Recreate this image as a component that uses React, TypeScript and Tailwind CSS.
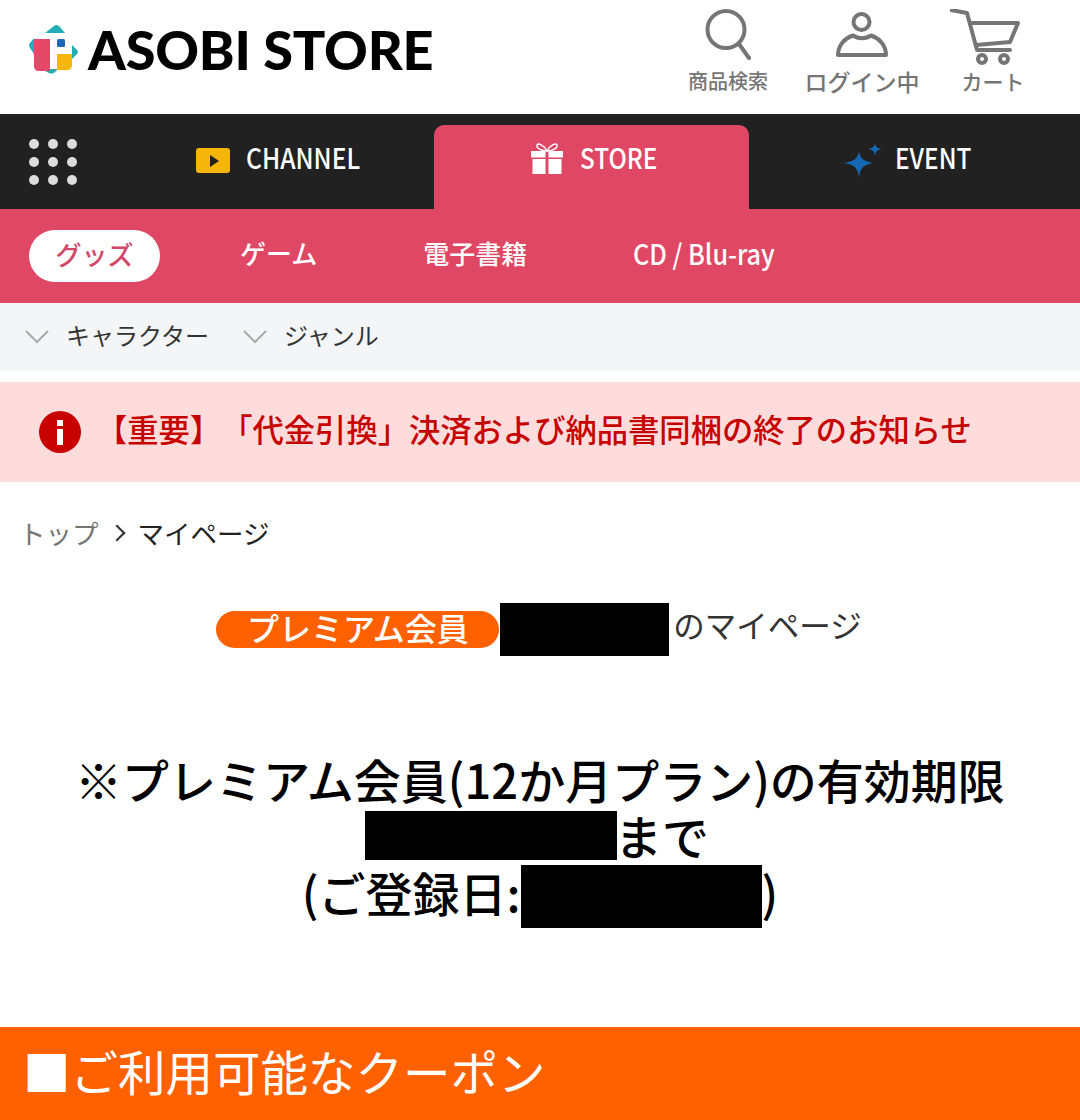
import React from "react"

const jp = "font-['Noto_Sans_CJK_JP','Noto_Sans',sans-serif]"

const LogoMark = () => (
  <svg width="50" height="50" viewBox="0 0 50 50" className="shrink-0">
    <path d="M16 8 L25 1 Q27 -1 30 1 L36 8 Z" fill="#22aeb4" />
    <path d="M5 13 L1 18 Q-1 20 1 23 L5 29 Z" fill="#22aeb4" />
    <path d="M43 34 L48 29 Q50 27 48 25 L43 20 Z" fill="#22aeb4" />
    <path d="M12 44 L20 48 Q23 49 25 48 L29 44 Z" fill="#22aeb4" />
    <path d="M5 14 H21 V46 H10 Q5 46 5 41 Z" fill="#e44a68" />
    <rect x="28" y="14" width="8" height="8" rx="1.500" fill="#1b69b8" />
    <path d="M28 29 H43 V40 Q43 45 38 45 H28 Z" fill="#f6b60b" />
  </svg>
)

const SearchIcon = () => (
  <svg width="46" height="54" viewBox="0 0 46 54" fill="none" stroke="#757575" strokeWidth="4" strokeLinecap="round" className="mt-[8px]">
    <circle cx="21" cy="21.500" r="18.500" />
    <path d="M34 36 L44 50" />
  </svg>
)

const UserIcon = () => (
  <svg width="52" height="46" viewBox="0 0 52 46" fill="none" stroke="#757575" strokeWidth="4" strokeLinejoin="round" className="mt-[12px]">
    <circle cx="25.500" cy="10" r="8" />
    <path d="M2 43 C2 33 9 26 17 23.500 C22 27 30 27 35 23.500 C43 26 50 33 50 43 Z" />
  </svg>
)

const CartIcon = () => (
  <svg width="70" height="56" viewBox="0 0 70 56" fill="none" stroke="#757575" strokeWidth="4" strokeLinecap="round" strokeLinejoin="round" className="mt-[9px] mr-[16px]">
    <path d="M1 1 L17 4 L27 41 H60" />
    <path d="M20 14 H68 L60 33 L26 36" />
    <circle cx="32" cy="50" r="4" />
    <circle cx="54" cy="50" r="4" />
  </svg>
)

const GiftIcon = () => (
  <svg width="32" height="32" viewBox="0 0 32 32" fill="#fff" className="shrink-0">
    <path d="M16 8 C12 1 7 0 6 2 C5 5 10 8 16 8 C22 8 27 5 26 2 C25 0 20 1 16 8 Z" fill="none" stroke="#fff" strokeWidth="1.400" />
    <rect x="0" y="8" width="14.500" height="6.500" />
    <rect x="17.500" y="8" width="14.500" height="6.500" />
    <rect x="1.500" y="16" width="13" height="15" />
    <rect x="17.500" y="16" width="13" height="15" />
  </svg>
)

const SparkleIcon = () => (
  <svg width="38" height="36" viewBox="0 0 38 36" fill="#1569b3" className="shrink-0">
    <path d="M15 8 C16 15 19 18 29 20 C19 22 16 25 15 35 C14 25 11 22 0 20 C11 18 14 15 15 8 Z" />
    <path d="M31 0 C31.500 3.500 33 5 37.500 6 C33 7 31.500 8.500 31 13 C30.500 8.500 29 7 24.500 6 C29 5 30.500 3.500 31 0 Z" />
  </svg>
)

const Chevron = () => (
  <svg width="24" height="14" viewBox="0 0 24 14" fill="none" stroke="#a9abab" strokeWidth="2" className="shrink-0">
    <path d="M1 1 L12 12 L23 1" />
  </svg>
)

const HeaderAction = ({ icon, label, className }: { icon: React.ReactNode; label: string; className: string }) => (
  <div className={`flex flex-col items-center ${className}`}>
    <div className="flex h-[66px] items-start justify-center">{icon}</div>
    <span className="leading-[30px] font-medium text-[#757575] whitespace-nowrap">{label}</span>
  </div>
)

const Blackout = ({ className }: { className: string }) => (
  <span className={`inline-block shrink-0 bg-black ${className}`} />
)

export default function App() {
  return (
    <div className={`${jp} w-[1080px] h-[1120px] overflow-hidden bg-white [text-spacing-trim:space-all]`}>
      {/* header */}
      <header className="flex h-[114px] items-start justify-between">
        <div className="flex items-center gap-[9px] pl-[29px] pt-[24px]">
          <LogoMark />
          <span className="font-['Lato',sans-serif] text-[54px] leading-[52px] font-black text-black tracking-[-0.2px] whitespace-nowrap">
            ASOBI STORE
          </span>
        </div>
        <div className="flex items-start pr-[51px]">
          <HeaderAction icon={<SearchIcon />} label="商品検索" className="w-[82px] text-[20px]" />
          <HeaderAction icon={<UserIcon />} label="ログイン中" className="ml-[35px] w-[116px] text-[23px]" />
          <HeaderAction icon={<CartIcon />} label="カート" className="ml-[37px] w-[72px] text-[21px]" />
        </div>
      </header>

      {/* main tabs */}
      <nav className="flex h-[95px] bg-[#212121] text-[28px] font-medium text-white">
        <div className="grid w-[119px] shrink-0 grid-cols-3 content-center justify-items-center gap-x-[8px] gap-y-[8px] pl-[29px] pr-[42px]">
          {Array.from({ length: 9 }).map((_, i) => (
            <span key={i} className="size-[10px] rounded-full bg-[#dcdcdc]" />
          ))}
        </div>
        <div className="flex h-full w-[315px] items-center justify-center gap-[16px] pb-[2px] pl-[3px]">
          <span className="flex h-[25px] w-[34px] items-center justify-center rounded-[3px] bg-[#f5b50a]">
            <span className="ml-[2px] border-y-[6px] border-l-[9px] border-y-transparent border-l-[#212121]" />
          </span>
          <span className="mb-[7px] inline-block w-[114px] origin-left scale-x-[.88] whitespace-nowrap">CHANNEL</span>
        </div>
        <div className="mt-[11px] flex h-[84px] w-[315px] items-center justify-center gap-[17px] rounded-t-[10px] bg-[#df4764] pb-[16px] pl-[4px]">
          <GiftIcon />
          <span className="mb-[4px] inline-block w-[76px] origin-left scale-x-[.87] whitespace-nowrap">STORE</span>
        </div>
        <div className="flex h-full w-[315px] items-center justify-center gap-[13px] pb-[2px]">
          <SparkleIcon />
          <span className="mb-[8px] inline-block w-[75px] origin-left scale-x-[.87] whitespace-nowrap">EVENT</span>
        </div>
      </nav>

      {/* sub nav */}
      <div className="flex h-[94px] items-center bg-[#df4764] pl-[29px] text-[26px] leading-[38px] font-medium text-white">
        <span className="flex h-[52px] w-[131px] items-center justify-center rounded-full bg-white pb-[5px] text-[#d1476a]">グッズ</span>
        <span className="mb-[6px] ml-[80px]">ゲーム</span>
        <span className="mb-[6px] ml-[106px]">電子書籍</span>
        <span className="mb-[6px] ml-[106px] inline-block w-[141px] origin-left scale-x-[.9] text-[28px] whitespace-nowrap">CD / Blu-ray</span>
      </div>

      {/* filters */}
      <div className="flex h-[68px] items-center bg-[#f4f5f7] pl-[25px] text-[24px] text-[#333]">
        <Chevron />
        <span className="mb-[4px] ml-[17px]">キャラクター</span>
        <span className="ml-[34px]"><Chevron /></span>
        <span className="mb-[4px] ml-[17px]">ジャンル</span>
      </div>

      {/* notice */}
      <div className="mt-[11px] flex h-[100px] items-center bg-[#ffdcdc] pl-[39px] text-[31.300px] text-[#c70000]">
        <span className="flex size-[42px] shrink-0 flex-col items-center justify-center gap-[3px] rounded-full bg-[#c70000]">
          <span className="h-[6px] w-[6px] bg-white" />
          <span className="h-[16px] w-[6px] bg-white" />
        </span>
        <span className="mb-[6px] ml-[15px] whitespace-nowrap font-medium">【重要】「代金引換」決済および納品書同梱の終了のお知らせ</span>
      </div>

      {/* breadcrumb */}
      <div className="mt-[32px] flex h-[38px] items-center pl-[19px] text-[26.500px] leading-[38px]">
        <span className="text-[#757575]">トップ</span>
        <span className="ml-[12px] mr-[15px] size-[12px] rotate-45 border-t-2 border-r-2 border-[#333]" />
        <span className="text-[#222]">マイページ</span>
      </div>

      {/* member line */}
      <div className="mt-[50px] flex h-[54px] items-center justify-center pr-[2px]">
        <span className="flex h-[37px] w-[283px] items-center justify-center rounded-full bg-[#ff6000] pb-[4px] text-[32px] leading-[33px] font-medium text-white">
          プレミアム会員
        </span>
        <Blackout className="ml-[1px] h-[53px] w-[169px]" />
        <span className="mb-[10px] ml-[4px] text-[31.500px] leading-[44px] text-[#333]">のマイページ</span>
      </div>

      {/* plan */}
      <div className="mt-[95px] text-center text-[47px] leading-[56px] font-medium text-black">
        <p className="h-[56px] whitespace-nowrap">※プレミアム会員(12か月プラン)の有効期限</p>
        <p className="flex h-[56px] items-center justify-center pr-[6px]">
          <Blackout className="h-[49px] w-[252px]" />
          <span className="-ml-[2px]">まで</span>
        </p>
        <p className="flex h-[57px] items-center justify-center">
          <span>(ご登録日:</span>
          <Blackout className="mt-[10px] h-[63px] w-[241px]" />
          <span>)</span>
        </p>
      </div>

      {/* coupons */}
      <div className="mt-[107px] flex h-[93px] items-center bg-[#ff6000] pb-[5px] pl-[23px] text-[47.500px] text-white">
        ■ご利用可能なクーポン
      </div>
    </div>
  )
}
